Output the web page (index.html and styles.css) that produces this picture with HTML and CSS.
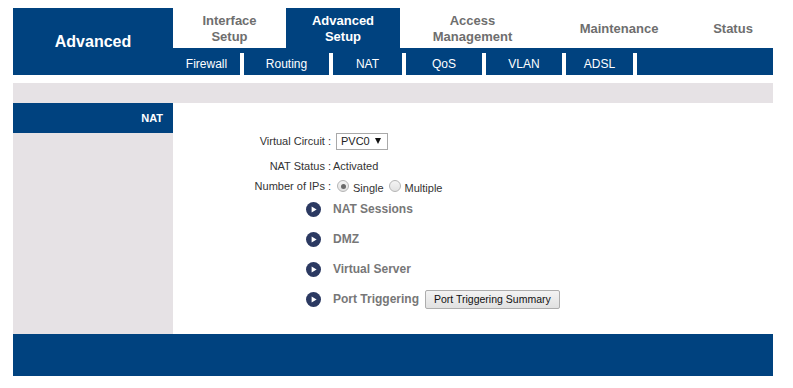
FILE: index.html
```html
<!DOCTYPE html>
<html lang="en">
<head>
  <meta charset="UTF-8" />
  <title>Advanced Setup - NAT</title>
  <link rel="stylesheet" href="styles.css">
</head>
<body>
  <div class="page">
    <div class="header">
      <div class="brand">Advanced</div>
      <div class="nav">
        <div class="tabs">
          <div class="tab">Interface<br>Setup</div>
          <div class="tab active">Advanced<br>Setup</div>
          <div class="tab">Access<br>Management</div>
          <div class="tab">Maintenance</div>
          <div class="tab">Status</div>
        </div>
        <div class="subnav">
          <div class="subnav-items">
            <div class="sub">Firewall</div>
            <div class="sub">Routing</div>
            <div class="sub">NAT</div>
            <div class="sub">QoS</div>
            <div class="sub">VLAN</div>
            <div class="sub">ADSL</div>
            <div class="sub"></div>
          </div>
        </div>
      </div>
    </div>

    <div class="strip"></div>

    <div class="main">
      <div class="sidebar">
        <div class="side-title">NAT</div>
      </div>
      <div class="content">
        <div class="row row-first">
          <span class="label">Virtual Circuit :</span>
          <div class="select">PVC0<span class="arrow"></span></div>
        </div>
        <div class="row">
          <span class="label">NAT Status :</span>
          <span class="value">Activated</span>
        </div>
        <div class="row">
          <span class="label">Number of IPs :</span>
          <div class="radios">
            <span class="radio checked"></span><span class="radio-text">Single</span>
            <span class="radio"></span><span class="radio-text">Multiple</span>
          </div>
        </div>

        <ul class="links">
          <li>
            <svg class="bullet" width="15" height="15" viewBox="0 0 15 15"><circle cx="7.5" cy="7.5" r="7.5" fill="#2b3961"/><path d="M5.6 4.4 L10.6 7.5 L5.6 10.6 Z" fill="#fff"/></svg>
            <span>NAT Sessions</span>
          </li>
          <li>
            <svg class="bullet" width="15" height="15" viewBox="0 0 15 15"><circle cx="7.5" cy="7.5" r="7.5" fill="#2b3961"/><path d="M5.6 4.4 L10.6 7.5 L5.6 10.6 Z" fill="#fff"/></svg>
            <span>DMZ</span>
          </li>
          <li>
            <svg class="bullet" width="15" height="15" viewBox="0 0 15 15"><circle cx="7.5" cy="7.5" r="7.5" fill="#2b3961"/><path d="M5.6 4.4 L10.6 7.5 L5.6 10.6 Z" fill="#fff"/></svg>
            <span>Virtual Server</span>
          </li>
          <li>
            <svg class="bullet" width="15" height="15" viewBox="0 0 15 15"><circle cx="7.5" cy="7.5" r="7.5" fill="#2b3961"/><path d="M5.6 4.4 L10.6 7.5 L5.6 10.6 Z" fill="#fff"/></svg>
            <span>Port Triggering</span>
            <button class="btn">Port Triggering Summary</button>
          </li>
        </ul>
      </div>
    </div>

    <div class="footer"></div>
  </div>
</body>
</html>
```

FILE: styles.css
```css
* {
  box-sizing: border-box;
}
body {
  margin: 0;
  padding: 0;
  background: #fff;
  font-family: "Liberation Sans", Arial, sans-serif;
}
.page {
  width: 760px;
  margin: 8px 0 0 13px;
}
.header {
  display: flex;
  height: 67px;
}
.brand {
  width: 160px;
  background: #00427f;
  color: #fff;
  font-size: 16px;
  font-weight: bold;
  display: flex;
  align-items: center;
  justify-content: center;
}
.nav {
  width: 600px;
  display: flex;
  flex-direction: column;
}
.tabs {
  height: 40px;
  display: grid;
  grid-template-columns: 113px 114px 145px 148px 80px;
}
.tab {
  display: flex;
  align-items: center;
  justify-content: center;
  text-align: center;
  padding-top: 2px;
  font-size: 13px;
  font-weight: bold;
  line-height: 16px;
  color: #6e6e6e;
}
.tab.active {
  background: #00427f;
  color: #fff;
}
.subnav {
  height: 27px;
  background: #00427f;
  padding-top: 5px;
}
.subnav-items {
  height: 22px;
  display: grid;
  grid-template-columns: 67px 85px 69px 76px 76px 67px 1fr;
  column-gap: 4px;
  background: #fff;
}
.sub {
  background: #00427f;
  color: #fff;
  font-size: 12px;
  display: flex;
  align-items: center;
  justify-content: center;
}
.strip {
  height: 20px;
  margin-top: 8px;
  background: #e6e2e5;
}
.main {
  display: flex;
  height: 231px;
}
.sidebar {
  width: 160px;
  background: #e6e2e5;
}
.side-title {
  height: 30px;
  background: #00427f;
  color: #fff;
  font-size: 11px;
  font-weight: bold;
  text-align: right;
  padding-right: 10px;
  line-height: 30px;
}
.content {
  flex: 1;
  background: #fff;
  padding-top: 28px;
}
.row {
  display: grid;
  grid-template-columns: 158px auto;
  column-gap: 2px;
  align-items: center;
  height: 20px;
  font-size: 11px;
  color: #333;
}
.row-first {
  margin-bottom: 5px;
}
.label {
  text-align: right;
}
.select {
  margin-left: 3px;
  width: 52px;
  height: 17px;
  border: 1px solid #a9a9a9;
  padding: 0 4px;
  display: flex;
  align-items: center;
  justify-content: space-between;
  font-size: 11px;
  color: #222;
}
.arrow {
  width: 0;
  height: 0;
  border-left: 3.5px solid transparent;
  border-right: 3.5px solid transparent;
  border-top: 6px solid #111;
  margin-right: 2px;
}
.radios {
  display: flex;
  align-items: center;
  padding-left: 4px;
}
.radio {
  width: 12px;
  height: 12px;
  border-radius: 50%;
  border: 1px solid #b5b5b5;
  background: linear-gradient(#f4f4f4, #e2e2e2);
  margin-right: 4px;
  position: relative;
}
.radio.checked::after {
  content: "";
  position: absolute;
  left: 2.5px;
  top: 2.5px;
  width: 5px;
  height: 5px;
  border-radius: 50%;
  background: #6a6a6a;
}
.radio-text {
  font-size: 11px;
  margin-top: 3px;
  margin-right: 5px;
}
.links {
  list-style: none;
  margin: -2px 0 0 0;
  padding: 0 0 0 133px;
}
.links li {
  height: 30px;
  display: flex;
  align-items: center;
  font-size: 12px;
  font-weight: bold;
  color: #777;
}
.bullet {
  margin-right: 12px;
}
.btn {
  margin-left: 6px;
  height: 19px;
  padding: 0 8px;
  font-family: "Liberation Sans", Arial, sans-serif;
  font-size: 10.5px;
  color: #111;
  border: 1px solid #adadad;
  border-radius: 2px;
  background: linear-gradient(#f3f3f3, #e1e1e1);
}
.footer {
  height: 42px;
  background: #00427f;
}
```
